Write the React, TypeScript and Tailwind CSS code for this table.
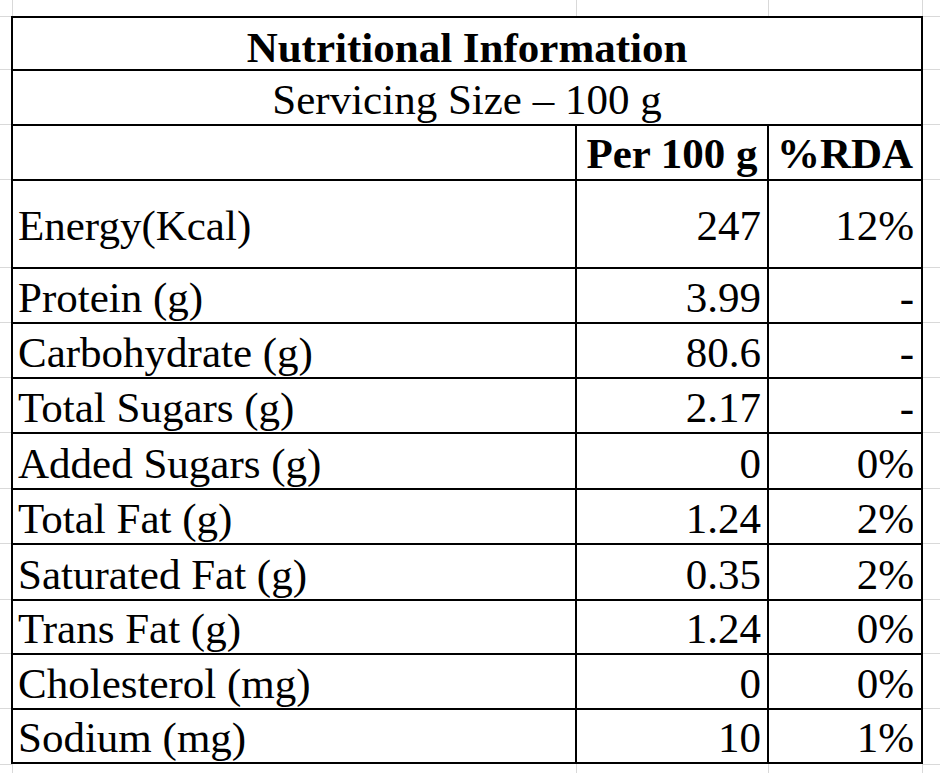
const rows = [
  { name: 'Energy(Kcal)', per: '247', rda: '12%', h: 'h-[88px]', pb: 'pb-[20px]' },
  { name: 'Protein (g)', per: '3.99', rda: '-', h: 'h-[55px]', pb: 'pb-[3px]' },
  { name: 'Carbohydrate (g)', per: '80.6', rda: '-', h: 'h-[55px]', pb: 'pb-[3px]' },
  { name: 'Total Sugars (g)', per: '2.17', rda: '-', h: 'h-[55px]', pb: 'pb-[3px]' },
  { name: 'Added Sugars (g)', per: '0', rda: '0%', h: 'h-[56px]', pb: 'pb-[3px]' },
  { name: 'Total Fat (g)', per: '1.24', rda: '2%', h: 'h-[55px]', pb: 'pb-[3px]' },
  { name: 'Saturated Fat (g)', per: '0.35', rda: '2%', h: 'h-[56px]', pb: 'pb-[3px]' },
  { name: 'Trans Fat (g)', per: '1.24', rda: '0%', h: 'h-[54px]', pb: 'pb-[3px]' },
  { name: 'Cholesterol (mg)', per: '0', rda: '0%', h: 'h-[55px]', pb: 'pb-[3px]' },
  { name: 'Sodium (mg)', per: '10', rda: '1%', h: 'h-[56px]', pb: 'pb-[3px]', last: true },
];

function Gutters({ children }: { children: React.ReactNode }) {
  return (
    <div className="flex">
      <div className="w-[11px] shrink-0 border-t border-[#d9d9d9]" />
      {children}
      <div className="flex-1 border-t border-[#d9d9d9]" />
    </div>
  );
}

function GridStrip({ h, top }: { h: string; top?: boolean }) {
  return (
    <div className={`flex ${h}`}>
      <div className={`w-[13px] shrink-0 border-r border-[#d9d9d9] ${top ? '' : 'border-t'}`} />
      <div className="w-[564px] shrink-0 border-r border-[#d9d9d9]" />
      <div className="w-[192px] shrink-0 border-r border-[#d9d9d9]" />
      <div className="w-[154px] shrink-0 border-r border-[#d9d9d9]" />
      <div className={`flex-1 border-[#d9d9d9] ${top ? '' : 'border-t'}`} />
    </div>
  );
}

export default function App() {
  return (
    <div className="w-[940px] h-[773px] overflow-hidden bg-white text-black font-['Liberation_Serif','Times_New_Roman',serif] text-[43px] leading-[42px]">
      <GridStrip h="h-[16px]" top />

      <Gutters>
        <div className="w-[912px] h-[53px] shrink-0 border-x-2 border-t-2 border-black flex items-end justify-center font-bold">
          Nutritional Information
        </div>
      </Gutters>

      <Gutters>
        <div className="w-[912px] h-[55px] shrink-0 border-x-2 border-t-2 border-black flex items-end justify-center pb-[3px]">
          Servicing Size – 100 g
        </div>
      </Gutters>

      <Gutters>
        <div className="w-[912px] h-[55px] shrink-0 border-x-2 border-t-2 border-black grid grid-cols-[562px_192px_154px] font-bold">
          <div />
          <div className="border-l-2 border-black flex items-end justify-center pb-[4px] whitespace-nowrap">Per 100 g</div>
          <div className="border-l-2 border-black flex items-end justify-center pb-[4px]">%RDA</div>
        </div>
      </Gutters>

      {rows.map((r) => (
        <Gutters key={r.name}>
          <div
            className={`w-[912px] shrink-0 border-x-2 border-t-2 border-black grid grid-cols-[562px_192px_154px] ${r.h} ${r.last ? 'border-b-2' : ''}`}
          >
            <div className={`flex items-end pl-[5px] whitespace-nowrap ${r.pb}`}>{r.name}</div>
            <div className={`border-l-2 border-black flex items-end justify-end pr-[6px] ${r.pb}`}>{r.per}</div>
            <div className={`border-l-2 border-black flex items-end justify-end pr-[7px] ${r.pb}`}>{r.rda}</div>
          </div>
        </Gutters>
      ))}

      <GridStrip h="h-[20px]" />
    </div>
  );
}
